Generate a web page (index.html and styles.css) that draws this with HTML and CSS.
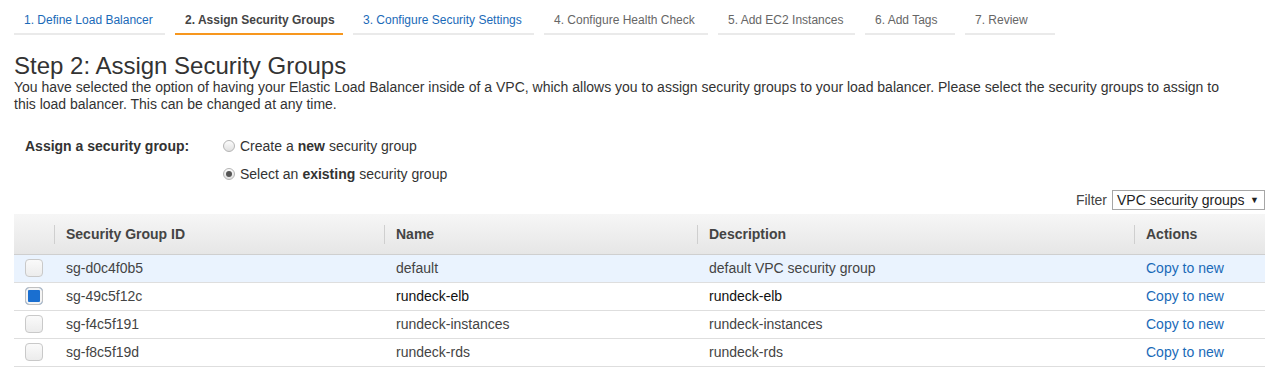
FILE: index.html
```html
<!DOCTYPE html>
<html>
<head>
<meta charset="utf-8">
<link rel="stylesheet" href="styles.css">
</head>
<body>
<div class="page">
  <nav class="tabs">
    <a class="tab t1 done">1. Define Load Balancer</a>
    <a class="tab t2 active">2. Assign Security Groups</a>
    <a class="tab t3 done">3. Configure Security Settings</a>
    <a class="tab t4">4. Configure Health Check</a>
    <a class="tab t5">5. Add EC2 Instances</a>
    <a class="tab t6">6. Add Tags</a>
    <a class="tab t7">7. Review</a>
  </nav>

  <h1 class="title">Step 2: Assign Security Groups</h1>
  <p class="intro">You have selected the option of having your Elastic Load Balancer inside of a VPC, which allows you to assign security groups to your load balancer. Please select the security groups to assign to this load balancer. This can be changed at any time.</p>

  <div class="assign">
    <div class="assign-label">Assign a security group:</div>
    <div class="options">
      <label class="opt"><span class="radio"></span>Create a <b>new</b> security group</label>
      <label class="opt"><span class="radio on"></span>Select an <b>existing</b> security group</label>
    </div>
  </div>

  <div class="filter">
    <span class="filter-label">Filter</span>
    <span class="select">VPC security groups <span class="arrow">▼</span></span>
  </div>

  <table class="grid">
    <colgroup>
      <col class="c-chk"><col class="c-id"><col class="c-name"><col class="c-desc"><col class="c-act">
    </colgroup>
    <thead>
      <tr>
        <th></th>
        <th class="sep">Security Group ID</th>
        <th class="sep">Name</th>
        <th class="sep">Description</th>
        <th class="sep">Actions</th>
      </tr>
    </thead>
    <tbody>
      <tr class="hover">
        <td><span class="cb"></span></td>
        <td>sg-d0c4f0b5</td>
        <td>default</td>
        <td>default VPC security group</td>
        <td><a class="link">Copy to new</a></td>
      </tr>
      <tr class="selected">
        <td><span class="cb on"></span></td>
        <td>sg-49c5f12c</td>
        <td class="dark">rundeck-elb</td>
        <td class="dark">rundeck-elb</td>
        <td><a class="link">Copy to new</a></td>
      </tr>
      <tr>
        <td><span class="cb"></span></td>
        <td>sg-f4c5f191</td>
        <td>rundeck-instances</td>
        <td>rundeck-instances</td>
        <td><a class="link">Copy to new</a></td>
      </tr>
      <tr>
        <td><span class="cb"></span></td>
        <td>sg-f8c5f19d</td>
        <td>rundeck-rds</td>
        <td>rundeck-rds</td>
        <td><a class="link">Copy to new</a></td>
      </tr>
    </tbody>
  </table>
</div>
</body>
</html>
```

FILE: styles.css
```css
* { box-sizing: border-box; }
html, body { margin: 0; padding: 0; background: #fff; }
body {
  font-family: "Liberation Sans", Arial, sans-serif;
  font-size: 14px;
  color: #444;
}
.page { padding: 0 6px 0 14px; }

.tabs {
  display: flex;
  gap: 10px;
  padding-top: 6px;
}
.tab {
  display: block;
  font-size: 12px;
  line-height: 17px;
  padding: 6px 0 4px 10px;
  border-bottom: 2px solid #eaeaea;
  color: #666;
  white-space: nowrap;
}
.tab.done { color: #1a6ab8; }
.tab.active { color: #444; font-weight: bold; border-bottom-color: #f7971e; }
.t1 { width: 151px; }
.t2 { width: 168px; }
.t3 { width: 181px; }
.t4 { width: 164px; }
.t5 { width: 137px; }
.t6 { width: 90px; }
.t7 { width: 90px; }

.title {
  margin: 18px 0 0;
  font-size: 24px;
  font-weight: normal;
  line-height: 26px;
  color: #333;
}
.intro {
  margin: 0;
  font-size: 14px;
  line-height: 17px;
  color: #333;
  padding-right: 30px;
}

.assign {
  display: flex;
  margin-top: 23px;
  padding-left: 11px;
}
.assign-label {
  width: 198px;
  font-weight: bold;
  line-height: 20px;
  color: #333;
}
.options { display: flex; flex-direction: column; gap: 8px; }
.opt {
  display: flex;
  align-items: center;
  line-height: 20px;
  color: #333;
}
.opt b { margin: 0 4px; }
.radio {
  width: 12px;
  height: 12px;
  border-radius: 50%;
  border: 1px solid #b4b4b4;
  background: linear-gradient(#fcfcfc, #e0e0e0);
  margin-right: 5px;
  position: relative;
}
.radio.on::after {
  content: "";
  position: absolute;
  left: 2px; top: 2px;
  width: 6px; height: 6px;
  border-radius: 50%;
  background: #555;
}

.filter {
  display: flex;
  justify-content: flex-end;
  align-items: center;
  gap: 5px;
  margin-top: 6px;
}
.filter-label { color: #444; }
.select {
  display: flex;
  align-items: center;
  justify-content: space-between;
  width: 153px;
  height: 20px;
  border: 1px solid #a6a6a6;
  padding: 0 5px 0 4px;
  color: #222;
  background: #fff;
  white-space: nowrap;
}
.arrow { font-size: 9px; color: #222; }

.grid {
  width: 100%;
  border-collapse: collapse;
  margin-top: 4px;
  table-layout: fixed;
}
.c-chk { width: 40px; }
.c-id { width: 330px; }
.c-name { width: 313px; }
.c-desc { width: 437px; }
.grid th {
  height: 40px;
  text-align: left;
  font-weight: bold;
  color: #444;
  background: linear-gradient(#f6f6f6, #e6e6e6);
  border-bottom: 1px solid #cfcfcf;
  padding: 0 0 0 12px;
  position: relative;
}
.grid th.sep::before {
  content: "";
  position: absolute;
  left: 0;
  top: 11px;
  height: 19px;
  border-left: 1px solid #cfcfcf;
}
.grid td {
  height: 28px;
  padding: 0 0 0 12px;
  border-bottom: 1px solid #dedede;
  color: #444;
  white-space: nowrap;
}
.grid td:first-child { padding-left: 11px; }
.grid tr.hover td { background: #eaf3fe; }
.grid td.dark { color: #111; }
.cb {
  display: block;
  width: 18px;
  height: 18px;
  border: 1px solid #c9c9c9;
  border-radius: 4px;
  background: linear-gradient(#fafafa, #ececec);
}
.cb.on {
  background: #1a6fd0;
  box-shadow: inset 0 0 0 2px #f4f4f4;
  border-color: #c0c0c0;
}
.link { color: #1a6ab8; }
```
